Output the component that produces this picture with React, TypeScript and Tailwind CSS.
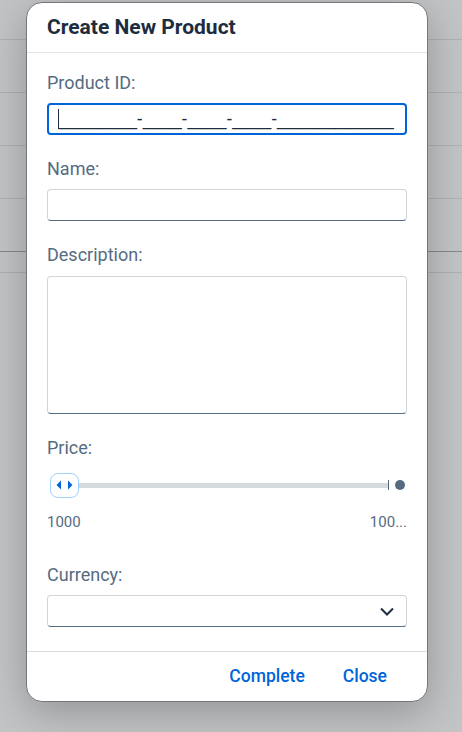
import React from "react";

const label = "block h-[24px] text-[18px] leading-[24px] text-[#556b82]";
const field = "h-[32px] w-full rounded-[4px] border border-[#d0d5da] border-b-[#556b82] bg-white";

function Handle() {
  return (
    <div className="flex h-[25px] w-[29px] shrink-0 items-center justify-center rounded-[8px] border-[1.5px] border-[#9fd0ff] bg-white">
      <svg width="17" height="10" viewBox="0 0 17 10">
        <path d="M5 0.5 L0.5 5 L5 9.5 Z" fill="#0064d9" />
        <path d="M12 0.5 L16.5 5 L12 9.5 Z" fill="#0064d9" />
      </svg>
    </div>
  );
}

export default function App() {
  return (
    <div className="relative h-[732px] w-[462px] overflow-hidden bg-[#c3c4c6] font-[Roboto,sans-serif]">
      {/* list behind the backdrop */}
      <div className="h-[40px] border-b border-[#aeb0b3]" />
      <div className="h-[53px] border-b border-[#aeb0b3]" />
      <div className="h-[53px] border-b border-[#aeb0b3]" />
      <div className="h-[53px] border-b border-[#aeb0b3]" />
      <div className="h-[53px] border-b border-[#85888c]" />
      <div className="h-[21px] border-b border-[#aeb0b3]" />

      <div className="absolute left-[26px] top-[2px] flex w-[402px] flex-col rounded-[16px] border border-[#74777b] bg-white shadow-[0_10px_40px_rgba(0,0,0,0.25)]">
        <div className="flex h-[50px] items-center border-b border-[#e2e4e6] px-[20px]">
          <h1 className="text-[21px] font-bold text-[#1d2d3e]">Create New Product</h1>
        </div>

        <div className="flex flex-col px-[20px] pb-[24px] pt-[18px]">
          <label className={label}>Product ID:</label>
          <div className="mt-[8px] flex h-[32px] items-center rounded-[4px] border-2 border-[#0064d9] pl-[9px]">
            <span className="h-[20px] w-px bg-[#1d2d3e]" />
            <span className="font-['Liberation_Sans',Arial,sans-serif] text-[17.5px] leading-[20px] text-[#1d2d3e]">________-____-____-____-____________</span>
          </div>

          <label className={label + " mt-[22px]"}>Name:</label>
          <div className={field + " mt-[8px]"} />

          <label className={label + " mt-[22px]"}>Description:</label>
          <div className="mt-[9px] h-[138px] w-full rounded-[4px] border border-[#d0d5da] border-b-[#556b82]" />

          <label className={label + " mt-[22px]"}>Price:</label>
          <div className="mt-[10px] flex h-[30px] items-center pl-[3px] pr-[2px]">
            <Handle />
            <div className="h-[5px] flex-1 bg-[#d5dadd]" />
            <div className="h-[10px] w-px bg-[#556b82]" />
            <div className="ml-[6px] h-[10px] w-[10px] rounded-full bg-[#556b82]" />
          </div>
          <div className="mt-[12px] flex h-[20px] justify-between text-[15px] leading-[20px] text-[#556b82]">
            <span>1000</span>
            <span>100...</span>
          </div>

          <label className={label + " mt-[31px]"}>Currency:</label>
          <div className="mt-[8px] flex h-[32px] w-full items-center justify-end rounded-[4px] border border-[#d0d5da] border-b-[#556b82] pr-[12px]">
            <svg width="14" height="9" viewBox="0 0 14 9">
              <path d="M1 1.5 L7 7.5 L13 1.5" fill="none" stroke="#1d2d3e" strokeWidth="2" />
            </svg>
          </div>
        </div>

        <div className="flex h-[50px] items-center justify-end border-t border-[#d9dcdf] pr-[21px]">
          <button className="px-[19px] text-[17.5px] font-medium text-[#0064d9]">Complete</button>
          <button className="px-[19px] text-[17.5px] font-medium text-[#0064d9]">Close</button>
        </div>
      </div>
    </div>
  );
}
